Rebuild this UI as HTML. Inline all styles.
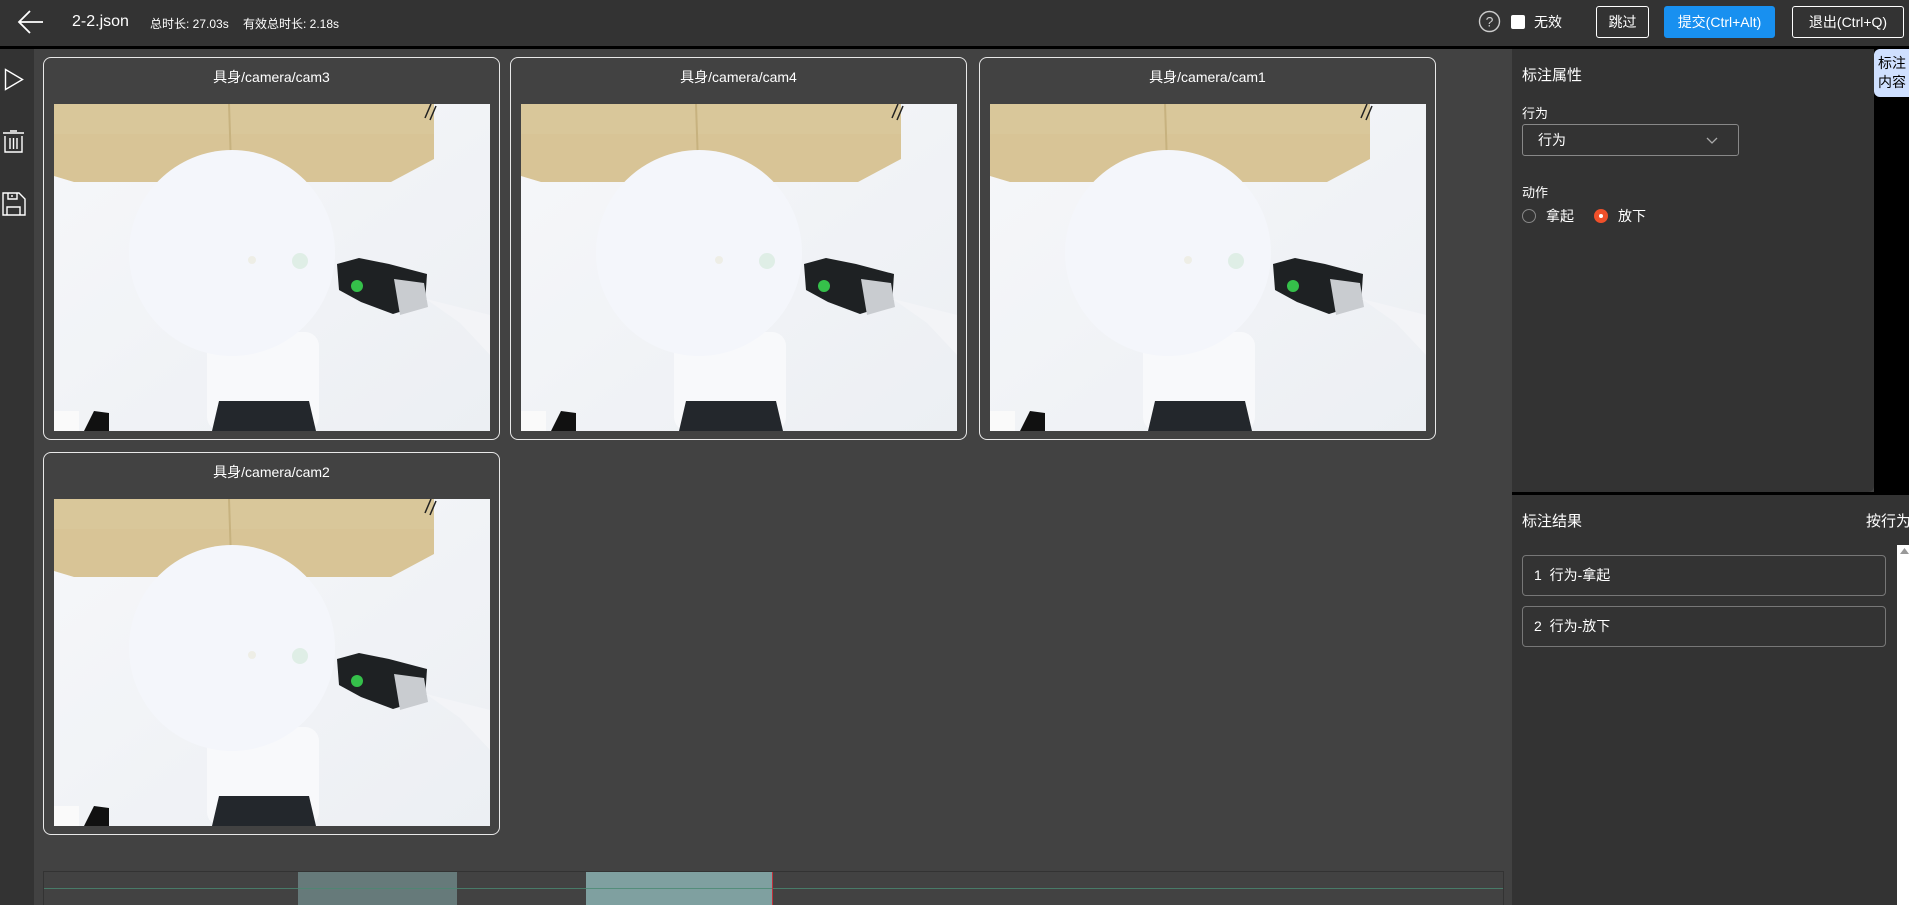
<!DOCTYPE html>
<html><head><meta charset="utf-8">
<style>
*{box-sizing:border-box;margin:0;padding:0}
body{width:1909px;height:905px;overflow:hidden;background:#424242;font-family:"Liberation Sans","Noto Sans CJK SC",sans-serif;color:#fff;position:relative}
.abs{position:absolute}
.top{left:0;top:0;width:1909px;height:46px;background:#333}
.blk{left:0;top:46px;width:1909px;height:3px;background:#000}
.side{left:0;top:49px;width:34px;height:856px;background:#333}
.cam{position:absolute;width:457px;height:383px;border:1px solid #e8e8e8;border-radius:8px}
.cam .t{position:absolute;top:9px;left:0;width:100%;text-align:center;font-size:14px}
.cam svg{position:absolute;left:10px;top:46px}
.btn{position:absolute;top:6px;height:32px;border:1px solid #fff;border-radius:3px;font-size:14px;line-height:30px;text-align:center}
.item{position:absolute;left:1522px;width:364px;height:41px;border:1px solid #777;border-radius:4px;font-size:14px;line-height:39px;padding-left:11px}
</style></head><body>
<div class="abs top"></div>
<div class="abs blk"></div>
<svg class="abs" style="left:17px;top:9px" width="28" height="26" viewBox="0 0 28 26"><path d="M26 13H3M13 2L2 13l11 11" fill="none" stroke="#fff" stroke-width="1.8"/></svg>
<div class="abs" style="left:72px;top:13px;font-size:16px">2-2.json</div>
<div class="abs" style="left:150px;top:15px;font-size:12px">总时长: 27.03s</div>
<div class="abs" style="left:243px;top:15px;font-size:12px">有效总时长: 2.18s</div>
<svg class="abs" style="left:1478px;top:10px" width="23" height="23"><circle cx="11.5" cy="11.5" r="10" fill="none" stroke="#ccc" stroke-width="1.4"/><text x="11.5" y="16.5" font-size="14" text-anchor="middle" fill="#ccc" font-family="Liberation Sans">?</text></svg>
<div class="abs" style="left:1511px;top:15px;width:14px;height:14px;background:#fff;border-radius:2px"></div>
<div class="abs" style="left:1534px;top:12px;font-size:14px">无效</div>
<div class="btn" style="left:1596px;width:53px">跳过</div>
<div class="btn" style="left:1664px;width:111px;background:#1890f0;border-color:#1890f0">提交(Ctrl+Alt)</div>
<div class="btn" style="left:1792px;width:112px">退出(Ctrl+Q)</div>

<div class="abs side"></div>
<svg class="abs" style="left:0;top:60px" width="34" height="170" fill="none" stroke="#fff" stroke-width="1.4">
<path d="M5.5 9.5L22.5 19.5 5.5 29.5Z"/>
<path d="M3 73h21M10 71h7M5 76v16h17V76M10 78v11M13.5 78v11M17 78v11"/>
<path d="M3 133h16l6 6v16H3ZM8 133v6h9v-6M12 135v2M7 155v-8h13v8"/>
</svg>

<div class="cam" style="left:43px;top:57px"><div class="t">具身/camera/cam3</div><svg width="436" height="327" viewBox="0 0 436 327"><use href="#scene"/></svg></div>
<div class="cam" style="left:510px;top:57px"><div class="t">具身/camera/cam4</div><svg width="436" height="327" viewBox="0 0 436 327"><use href="#scene"/></svg></div>
<div class="cam" style="left:979px;top:57px"><div class="t">具身/camera/cam1</div><svg width="436" height="327" viewBox="0 0 436 327"><use href="#scene"/></svg></div>
<div class="cam" style="left:43px;top:452px"><div class="t">具身/camera/cam2</div><svg width="436" height="327" viewBox="0 0 436 327"><use href="#scene"/></svg></div>

<svg width="0" height="0" style="position:absolute"><defs>
<linearGradient id="fl" x1="0" y1="0" x2="1" y2="1"><stop offset="0" stop-color="#f6f7fa"/><stop offset="1" stop-color="#eceff3"/></linearGradient>
<g id="scene">
<rect width="436" height="327" fill="url(#fl)"/>
<path d="M0 0H380V55L352 70 337 78H20L0 72Z" fill="#d8c496"/>
<path d="M0 0H380V30H0Z" fill="#d9c79a"/>
<line x1="175" y1="0" x2="177" y2="60" stroke="#c7b27f" stroke-width="2"/>
<path d="M377 0l-6 14M382 2l-6 14" stroke="#222" stroke-width="1.5"/>
<rect x="153" y="228" width="112" height="99" rx="14" fill="#f8f9fb"/>
<path d="M165 297H255L262 327H158Z" fill="#23272c"/>
<circle cx="178" cy="149" r="103" fill="#f4f6fb"/>
<circle cx="198" cy="156" r="4" fill="#eeeee6"/>
<circle cx="246" cy="157" r="8" fill="#dfeee6"/>
<path d="M283 160l22-6 30 6 38 10 -2 30 -32 10 -32 -12 -22 -12Z" fill="#1e2123"/>
<path d="M340 175l30 4 4 24-28 8Z" fill="#c9ccd0"/>
<circle cx="303" cy="182" r="6" fill="#35c04a"/>
<path d="M372 195l64 16v40l-30-32Z" fill="#f3f4f7"/>
<rect x="0" y="307" width="25" height="20" fill="#fafafa"/>
<path d="M30 327l10-20 15 2v18Z" fill="#111"/>
</g></defs></svg>

<div class="abs" style="left:43px;top:871px;width:1461px;height:34px;border:1px solid #333;border-bottom:none"></div>
<div class="abs" style="left:298px;top:872px;width:159px;height:33px;background:#667a7a"></div>
<div class="abs" style="left:586px;top:872px;width:186px;height:33px;background:#7fa0a0"></div>
<div class="abs" style="left:44px;top:888px;width:1459px;height:1px;background:#4a8a72;opacity:.8"></div>
<div class="abs" style="left:772px;top:872px;width:1px;height:33px;background:#c0303a"></div>

<div class="abs" style="left:1874px;top:49px;width:35px;height:446px;background:#000"></div>
<div class="abs" style="left:1512px;top:49px;width:362px;height:443px;background:#333;border-radius:0 0 6px 0"></div>
<div class="abs" style="left:1512px;top:492px;width:397px;height:3px;background:#000"></div>
<div class="abs" style="left:1874px;top:49px;width:35px;height:48px;background:#cfe0ff;border-radius:6px 0 0 6px;color:#000;font-size:14px;line-height:19px;padding:5px 0 0 4px">标注<br>内容</div>
<div class="abs" style="left:1522px;top:64px;font-size:15px">标注属性</div>
<div class="abs" style="left:1522px;top:103px;font-size:13px">行为</div>
<div class="abs" style="left:1522px;top:124px;width:217px;height:32px;border:1px solid #888;border-radius:3px;font-size:14px;line-height:30px;padding-left:15px">行为
<svg style="position:absolute;right:20px;top:12px" width="12" height="7"><path d="M1 1l5 5 5-5" fill="none" stroke="#aaa" stroke-width="1.3"/></svg></div>
<div class="abs" style="left:1522px;top:182px;font-size:13px">动作</div>
<div class="abs" style="left:1522px;top:209px;width:14px;height:14px;border:1px solid #888;border-radius:50%"></div>
<div class="abs" style="left:1546px;top:206px;font-size:14px">拿起</div>
<div class="abs" style="left:1594px;top:209px;width:14px;height:14px;background:#f0502a;border-radius:50%"><div style="margin:5px;width:4px;height:4px;background:#fff;border-radius:50%"></div></div>
<div class="abs" style="left:1618px;top:206px;font-size:14px">放下</div>

<div class="abs" style="left:1512px;top:495px;width:397px;height:410px;background:#333"></div>
<div class="abs" style="left:1522px;top:510px;font-size:15px">标注结果</div>
<div class="abs" style="left:1866px;top:510px;font-size:15px;white-space:nowrap">按行为</div>
<div class="abs" style="left:1897px;top:545px;width:12px;height:360px;background:#fff"></div>
<svg class="abs" style="left:1900px;top:548px" width="9" height="7"><path d="M0 6L4.5 0 9 6Z" fill="#999"/></svg>
<div class="item" style="top:555px">1&nbsp;&nbsp;行为-拿起</div>
<div class="item" style="top:606px">2&nbsp;&nbsp;行为-放下</div>
</body></html>
